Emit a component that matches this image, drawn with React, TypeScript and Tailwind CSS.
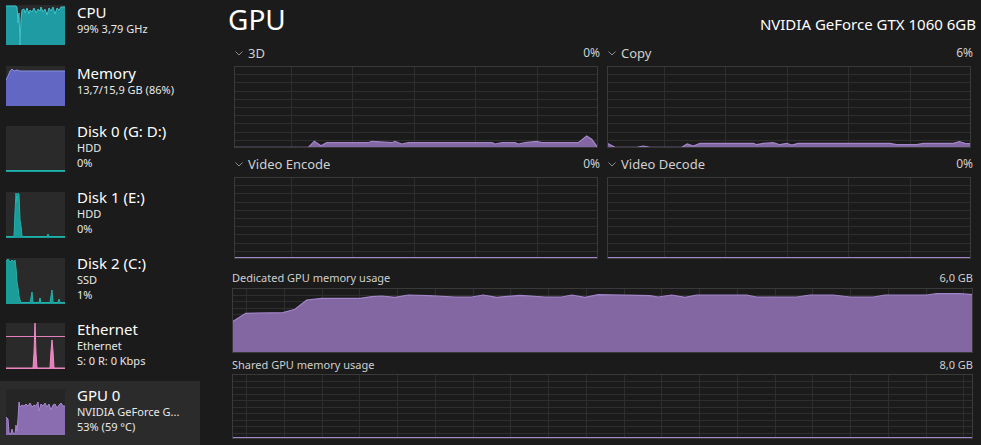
import React from "react";

type Pt = [number, number];

const PURPLE_FILL = "#8367a2";
const PURPLE_LINE = "#a285c8";
const GRID = "#2e2e2e";
const BORDER = "#3a3a3a";

function areaPath(pts: Pt[], h: number): string {
  const first = pts[0];
  const last = pts[pts.length - 1];
  let d = `M${first[0]},${h} L${first[0]},${first[1]}`;
  for (let i = 1; i < pts.length; i++) d += ` L${pts[i][0]},${pts[i][1]}`;
  d += ` L${last[0]},${h} Z`;
  return d;
}
function linePath(pts: Pt[]): string {
  return pts.map((p, i) => `${i === 0 ? "M" : "L"}${p[0]},${p[1]}`).join(" ");
}

function Chart({
  w,
  h,
  vlines,
  rows,
  pts,
  baseline,
}: {
  w: number;
  h: number;
  vlines: number[];
  rows: number;
  pts?: Pt[];
  baseline?: boolean;
}) {
  const hl: number[] = [];
  for (let i = 1; i < rows; i++) hl.push((h * i) / rows);
  return (
    <svg width={w} height={h} className="block">
      {hl.map((y, i) => (
        <line key={"h" + i} x1={0} x2={w} y1={Math.round(y) + 0.5} y2={Math.round(y) + 0.5} stroke={GRID} strokeWidth={1} />
      ))}
      {vlines.map((x, i) => (
        <line key={"v" + i} x1={Math.round(x) + 0.5} x2={Math.round(x) + 0.5} y1={0} y2={h} stroke={GRID} strokeWidth={1} />
      ))}
      {pts && <path d={areaPath(pts, h)} fill={PURPLE_FILL} />}
      {pts && <path d={linePath(pts)} fill="none" stroke={PURPLE_LINE} strokeWidth={1.2} />}
      {baseline && <line x1={0} x2={w} y1={h - 1} y2={h - 1} stroke={PURPLE_LINE} strokeWidth={2} />}
      <rect x={0.5} y={0.5} width={w - 1} height={h - 1} fill="none" stroke={BORDER} strokeWidth={1} />
    </svg>
  );
}

const upperV = [57, 118, 180, 241, 303];
const memV: number[] = [];
for (let k = 0; k < 20; k++) memV.push(14 + k * 37.75);

const pts3D: Pt[] = [
  [0, 81.3], [74.3, 81.3], [80.3, 75.3], [87, 79.7], [92.7, 76.7], [134.3, 76.7], [137.7, 75.3],
  [158, 76.7], [161, 75.3], [167.7, 78], [174.3, 76.7], [258, 76.7], [261, 78], [268, 76.7],
  [281, 76.7], [284.3, 78], [291, 76.7], [302.7, 75.3], [307.7, 76.7], [344.3, 76.7], [352.7, 70],
  [357.7, 73.3], [363.7, 81.3],
];
const ptsCopy: Pt[] = [
  [0.3, 77.3], [8, 81.3], [29.7, 81.3], [36.3, 80], [43, 81.3], [74.7, 81.3], [80.3, 78], [86.3, 80],
  [93, 77.3], [146.3, 77.3], [149.7, 78.7], [156.3, 77.3], [166.3, 76.7], [173, 78.7], [179.7, 77.3],
  [184.7, 79], [191.3, 77.3], [283, 77.3], [289.7, 78.7], [309.7, 78.7], [316.3, 77.3], [346.3, 77.3],
  [352.3, 75.7], [358, 77.3], [364, 77.7],
];
const ptsMem: Pt[] = [
  [0, 34], [13.7, 25.3], [51, 24.7], [63, 21.3], [74.7, 12], [89.7, 10.3], [128, 10.3], [139.7, 8.7],
  [149.7, 8], [163, 9.3], [176.3, 7], [196.3, 7.7], [223, 9], [239.7, 9], [251.3, 7], [264.7, 9.3],
  [288, 7.3], [313, 9], [329.7, 9], [339.7, 7], [353, 9.3], [366.3, 6.7], [418, 7.7], [426.3, 9],
  [439.7, 7], [453, 9.3], [464.7, 7], [514.7, 7], [524.7, 9], [564.7, 9], [578, 7], [601.3, 7],
  [618, 9], [641.3, 9], [653, 7], [694.7, 7], [704.7, 5.7], [728, 5.7], [741, 6.7],
];

function Chevron() {
  return (
    <svg width="8" height="5" className="block">
      <polyline points="0.5,0.5 4,4 7.5,0.5" fill="none" stroke="#8c8c8c" strokeWidth="1" />
    </svg>
  );
}

function Thumb({
  h,
  bg,
  fill,
  line,
  pts,
  children,
}: {
  h: number;
  bg: string;
  fill: string;
  line: string;
  pts: Pt[];
  children?: React.ReactNode;
}) {
  return (
    <svg width={59} height={h} className="block shrink-0">
      <rect x={0} y={0} width={59} height={h} fill={bg} />
      {children}
      <path d={areaPath(pts, h)} fill={fill} />
      <path d={linePath(pts)} fill="none" stroke={line} strokeWidth={1} />
    </svg>
  );
}

const cpuPts: Pt[] = [
  [0, 1], [10, 1], [11, 2], [12, 18], [13, 8], [14, 40], [15, 14], [16, 5], [18, 4], [19, 8], [21, 3],
  [23, 9], [24, 5], [26, 7], [28, 3], [30, 8], [32, 4], [34, 6], [35, 2], [37, 7], [39, 4], [41, 10],
  [43, 3], [45, 6], [47, 2], [49, 9], [51, 3], [53, 5], [55, 2], [59, 2],
];
const memPts: Pt[] = [
  [0, 14], [2, 10], [4, 5], [6, 3], [8, 5], [11, 4], [14, 5], [59, 5],
];
const disk0Pts: Pt[] = [[0, 44.5], [59, 44.5]];
const disk1Pts: Pt[] = [
  [0, 44.5], [8, 44.5], [9, 20], [10, 1], [11, 10], [12, 1], [13, 2], [14, 28], [15, 34], [16, 44], [17, 44.5],
  [41, 44.5], [42, 42], [43, 44.5], [59, 44.5],
];
const disk2Pts: Pt[] = [
  [0, 3], [2, 1], [4, 4], [6, 2], [8, 4], [9, 2], [10, 10], [11, 24], [12, 30], [13, 38], [14, 42], [15, 44.5],
  [24, 44.5], [25, 40], [26, 34], [27, 44.5], [33, 44.5], [34, 40], [35, 44.5], [44, 44.5], [45, 38], [46, 32],
  [47, 44.5], [52, 44.5], [53, 41], [54, 44.5], [59, 44.5],
];
const ethPts: Pt[] = [
  [0, 45], [27, 45], [28, 30], [29, 0], [30, 30], [31, 45], [44, 45], [45, 28], [46, 17], [47, 28], [48, 45], [59, 45],
];
const gpuPts: Pt[] = [
  [0, 28], [2, 30], [3, 44], [5, 45], [6, 40], [7, 44], [9, 45], [10, 36], [11, 42], [12, 30], [13, 13],
  [14, 18], [16, 16], [18, 17], [20, 15], [22, 17], [24, 14], [26, 18], [28, 16], [30, 17], [32, 13], [33, 22],
  [35, 15], [37, 17], [39, 14], [41, 18], [43, 15], [45, 21], [47, 16], [49, 15], [51, 19], [53, 16], [55, 14],
  [57, 17], [59, 17],
];

function SideItem({
  h,
  thumbTop,
  textTop,
  selected,
  thumb,
  title,
  lines,
}: {
  h: number;
  thumbTop: string;
  textTop: string;
  selected?: boolean;
  thumb: React.ReactNode;
  title: string;
  lines: string[];
}) {
  return (
    <div className={`flex items-start shrink-0 ${selected ? "bg-[#2b2b2b]" : ""}`} style={{ height: h }}>
      <div className={`ml-[6px] ${thumbTop}`}>{thumb}</div>
      <div className={`ml-[12px] ${textTop} flex flex-col`}>
        <div className="text-[15px] leading-[21px] h-[19px] text-white whitespace-nowrap">{title}</div>
        {lines.map((l, i) => (
          <div key={i} className="text-[11px] leading-[15px] text-[#e8e8e8] whitespace-nowrap">
            {l}
          </div>
        ))}
      </div>
    </div>
  );
}

export default function App() {
  return (
    <div className="w-[981px] h-[445px] overflow-hidden bg-[#1b1b1b] flex [font-family:'Segoe_UI','Noto_Sans','Open_Sans',sans-serif]">
      {/* Sidebar */}
      <div className="w-[200px] shrink-0 flex flex-col">
        <SideItem
          h={57}
          thumbTop="mt-[5px]"
          textTop="mt-[2px]"
          thumb={<Thumb h={40} bg="#2a2a2a" fill="#1f9ba3" line="#3cc4cc" pts={cpuPts} />}
          title="CPU"
          lines={["99%  3,79 GHz"]}
        />
        <SideItem
          h={60}
          thumbTop="mt-[9px]"
          textTop="mt-[6px]"
          thumb={<Thumb h={40} bg="#2a2a2a" fill="#6167c2" line="#8b90e2" pts={memPts} />}
          title="Memory"
          lines={["13,7/15,9 GB (86%)"]}
        />
        <SideItem
          h={66}
          thumbTop="mt-[9px]"
          textTop="mt-[4px]"
          thumb={<Thumb h={46} bg="#2a2a2a" fill="#1a9c98" line="#1fb3ad" pts={disk0Pts} />}
          title="Disk 0 (G: D:)"
          lines={["HDD", "0%"]}
        />
        <SideItem
          h={66}
          thumbTop="mt-[9px]"
          textTop="mt-[4px]"
          thumb={<Thumb h={46} bg="#2a2a2a" fill="#1a9c98" line="#1fb3ad" pts={disk1Pts} />}
          title="Disk 1 (E:)"
          lines={["HDD", "0%"]}
        />
        <SideItem
          h={66}
          thumbTop="mt-[9px]"
          textTop="mt-[4px]"
          thumb={<Thumb h={46} bg="#2a2a2a" fill="#1a9c98" line="#1fb3ad" pts={disk2Pts} />}
          title="Disk 2 (C:)"
          lines={["SSD", "1%"]}
        />
        <SideItem
          h={66}
          thumbTop="mt-[8px]"
          textTop="mt-[4px]"
          thumb={
            <Thumb h={46} bg="#2a2a2a" fill="#e680bc" line="#f08cc6" pts={ethPts}>
              <line x1={0} x2={59} y1={13.5} y2={13.5} stroke="#e680bc" strokeWidth={1} />
            </Thumb>
          }
          title="Ethernet"
          lines={["Ethernet", "S: 0 R: 0 Kbps"]}
        />
        <SideItem
          h={66}
          selected
          thumbTop="mt-[8px]"
          textTop="mt-[4px]"
          thumb={<Thumb h={46} bg="#252525" fill="#8a6db0" line="#a487cc" pts={gpuPts} />}
          title="GPU 0"
          lines={["NVIDIA GeForce G...", "53%  (59 °C)"]}
        />
      </div>

      {/* Main */}
      <div className="flex-1 flex flex-col pl-[32px] pr-[8px]">
        <div className="h-[44px] flex items-baseline justify-between">
          <div className="-ml-[4px] mt-[2px] text-[28px] leading-[34px] text-white">GPU</div>
          <div className="text-[15px] leading-[20px] text-white mr-[-3px]">NVIDIA GeForce GTX 1060 6GB</div>
        </div>

        <div className="ml-[2px] grid grid-cols-[364px_364px] gap-x-[9px]">
          {[
            { label: "3D", val: "0%", pts: pts3D, top: "" },
            { label: "Copy", val: "6%", pts: ptsCopy, top: "" },
            { label: "Video Encode", val: "0%", pts: undefined, top: "mt-[7px]" },
            { label: "Video Decode", val: "0%", pts: undefined, top: "mt-[7px]" },
          ].map((c, i) => (
            <div key={i} className={`flex flex-col ${c.top}`}>
              <div className="h-[22px] flex items-start justify-between">
                <div className="flex items-center text-[13px] leading-[18px] text-[#d0d0d0]">
                  <div className="ml-[1px] mr-[5px] mt-[1px]">
                    <Chevron />
                  </div>
                  {c.label}
                </div>
                <div className="text-[12px] leading-[18px] text-[#d0d0d0] mr-[-2px]">{c.val}</div>
              </div>
              <Chart w={364} h={82} vlines={upperV} rows={10} pts={c.pts} baseline={!c.pts} />
            </div>
          ))}
        </div>

        <div className="mt-[12px] h-[17px] flex items-start justify-between text-[11px] leading-[14px] text-[#cfcfcf]">
          <span>Dedicated GPU memory usage</span>
          <span>6,0 GB</span>
        </div>
        <Chart w={741} h={65} vlines={memV} rows={10} pts={ptsMem} />

        <div className="mt-[5px] h-[16px] flex items-start justify-between text-[11px] leading-[14px] text-[#cfcfcf]">
          <span>Shared GPU memory usage</span>
          <span>8,0 GB</span>
        </div>
        <Chart w={741} h={65} vlines={memV} rows={10} baseline />
      </div>
    </div>
  );
}
